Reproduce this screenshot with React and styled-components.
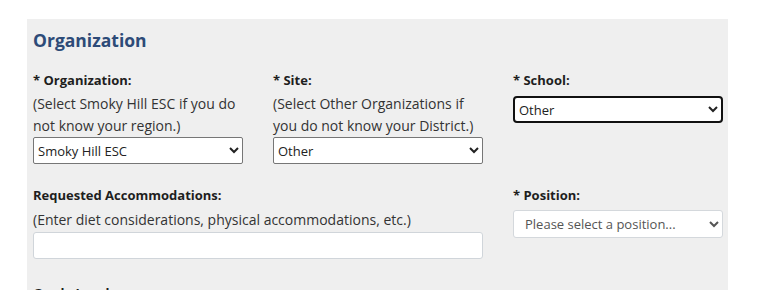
import React from 'react'
import styled, { createGlobalStyle } from 'styled-components'

const GlobalStyle = createGlobalStyle`
  body {
    margin: 0;
    background: #ffffff;
    font-family: 'Open Sans', 'Noto Sans', sans-serif;
    color: #222;
  }
`;

const Panel = styled.section`
  margin: 19px 0 0 27px;
  width: 701px;
  height: 271px;
  background: #efefef;
  padding: 8px 6px 0;
  box-sizing: border-box;
  overflow: hidden;
`;

const Heading = styled.h2`
  margin: 0 0 17px;
  font-size: 17.5px;
  line-height: 26px;
  font-weight: 700;
  color: #2d4b78;
`;

const Grid = styled.div`
  display: grid;
  grid-template-columns: repeat(3, 210px);
  column-gap: 30px;
  row-gap: 21px;
  align-items: start;
`;

const Field = styled.div`
  display: flex;
  flex-direction: column;
  grid-column: ${p => (p.span ? `span ${p.span}` : 'auto')};
`;

const Label = styled.label`
  font-size: 13px;
  line-height: 20px;
  font-weight: 700;
  color: #1e1e1e;
  margin-bottom: ${p => p.gap || 3}px;
`;

const Help = styled.div`
  font-size: 14px;
  line-height: 22px;
  color: #333;
`;

const Select = styled.select`
  width: 210px;
  height: 27px;
  font-family: 'Open Sans', sans-serif;
  font-size: 13px;
  color: #222;
  background: #fff;
  border: 1px solid #767676;
  border-radius: 2px;
  padding: 0;
  box-sizing: border-box;
  margin-top: ${p => p.offset || 0}px;
  ${p => p.focused && `
    border: 2px solid #111;
    border-radius: 4px;
    padding: 0;
  `}
  ${p => p.soft && `
    height: 28px;
    border: 1px solid #d4d8dc;
    border-radius: 3px;
    padding: 0 7px;
    color: #555;
  `}
`;

const TextInput = styled.input`
  width: 450px;
  height: 27px;
  margin-top: 1px;
  border: 1px solid #d0d5da;
  border-radius: 3px;
  background: #fff;
  box-sizing: border-box;
  font-family: 'Open Sans', sans-serif;
  font-size: 13px;
`;

const NextLabel = styled(Label)`
  display: block;
  margin-top: 24px;
`;

export default function App() {
  return (
    <>
      <GlobalStyle />
      <Panel>
        <Heading>Organization</Heading>
        <Grid>
          <Field>
            <Label>* Organization:</Label>
            <Help>(Select Smoky Hill ESC if you do not know your region.)</Help>
            <Select defaultValue="Smoky Hill ESC">
              <option>Smoky Hill ESC</option>
            </Select>
          </Field>
          <Field>
            <Label>* Site:</Label>
            <Help>(Select Other Organizations if you do not know your District.)</Help>
            <Select defaultValue="Other">
              <option>Other</option>
            </Select>
          </Field>
          <Field>
            <Label>* School:</Label>
            <Select focused offset={3} defaultValue="Other">
              <option>Other</option>
            </Select>
          </Field>
          <Field span={2}>
            <Label gap={4}>Requested Accommodations:</Label>
            <Help>(Enter diet considerations, physical accommodations, etc.)</Help>
            <TextInput type="text" />
          </Field>
          <Field>
            <Label gap={5}>* Position:</Label>
            <Select soft defaultValue="">
              <option value="">Please select a position...</option>
            </Select>
          </Field>
        </Grid>
        <NextLabel>Grade Level:</NextLabel>
      </Panel>
    </>
  )
}
